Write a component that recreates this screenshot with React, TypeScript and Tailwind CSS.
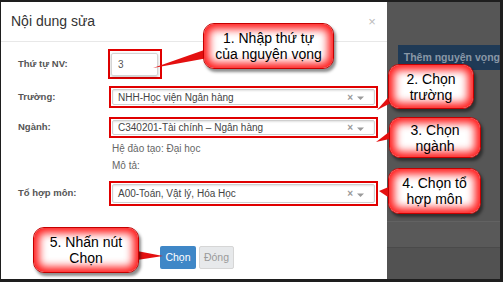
import React from 'react';

const font = { fontFamily: '"Liberation Sans", Arial, sans-serif' };

function Callout({ className, lines }: { className: string; lines: string[] }) {
  return (
    <div
      className={
        'absolute flex flex-col items-center justify-center rounded-[11px] border border-[#c40000] bg-white text-[14px] leading-[16px] text-black shadow-[inset_0_0_9px_5px_#ff1a1a,2px_3px_3px_rgba(0,0,0,0.45)] ' +
        className
      }
    >
      {lines.map((l) => (
        <span key={l}>{l}</span>
      ))}
    </div>
  );
}

function SelectBox({ value, boxClass }: { value: string; boxClass: string }) {
  return (
    <div className={'w-[269px] border-2 border-[#e00000] p-px ' + boxClass}>
      <div className="flex h-full items-center rounded-[2px] border border-[#cfcfcf] bg-white pl-[5px] pr-[9px] text-[10px] text-[#444] shadow-[inset_0_1px_2px_rgba(0,0,0,0.12)]">
        <span className="flex-1">{value}</span>
        <span className="text-[10px] font-bold text-[#999]">×</span>
        <svg width="9" height="6" viewBox="0 0 9 6" className="ml-[3px] mt-[2px]">
          <path d="M1 1.5h7L4.5 5z" fill="#9a9a9a" />
        </svg>
      </div>
    </div>
  );
}

export default function App() {
  return (
    <div
      style={font}
      className="relative flex h-[282px] w-[503px] overflow-hidden border-b-[3px] border-l border-r-[3px] border-t-2 border-[#1e1e1e] bg-[#565656]"
    >
      {/* modal */}
      <div className="flex w-[391px] flex-col bg-white">
        <div className="flex h-[40px] items-center justify-between border-b border-[#e8e8e8] pl-[10px] pr-[11px]">
          <span className="text-[14px] text-[#333]">Nội dung sửa</span>
          <span className="text-[13px] text-[#bbb]">×</span>
        </div>

        <div className="flex flex-col pl-[17px] pt-[7px] text-[10px] text-[#333]">
          <div className="flex items-center">
            <span className="w-[90px] text-[9.5px] font-bold text-[#555]">Thứ tự NV:</span>
            <div className="h-[30px] w-[54px] border-2 border-[#e00000] px-px py-[2px]">
              <div className="flex h-[23px] w-[47px] items-center rounded-[2px] border border-[#d4d4d4] pl-[6px] text-[#555] shadow-[0_1px_3px_rgba(0,0,0,0.25)]">
                3
              </div>
            </div>
          </div>

          <div className="mt-[7px] flex items-center">
            <span className="w-[91px] text-[9.5px] font-bold text-[#555]">Trường:</span>
            <SelectBox value="NHH-Học viện Ngân hàng" boxClass="h-[22px]" />
          </div>

          <div className="mt-[9px] flex items-center">
            <span className="w-[91px] text-[9.5px] font-bold text-[#555]">Ngành:</span>
            <SelectBox value="C340201-Tài chính – Ngân hàng" boxClass="h-[21px]" />
          </div>

          <div className="ml-[94px] mt-[3px] text-[#666]">Hệ đào tạo: Đại học</div>
          <div className="ml-[94px] mt-[2px] text-[#666]">Mô tả:</div>

          <div className="mt-[8px] flex items-center">
            <span className="w-[91px] text-[9.5px] font-bold text-[#555]">Tổ hợp môn:</span>
            <SelectBox value="A00-Toán, Vật lý, Hóa Học" boxClass="h-[25px]" />
          </div>

          <div className="ml-[142px] mt-[40px] flex gap-[3px] text-[10.5px]">
            <button className="h-[23px] w-[36px] rounded-[2px] bg-[#3f87c7] text-white">Chọn</button>
            <button className="h-[23px] w-[35px] rounded-[2px] border border-[#d6d6d6] bg-[#e7e9eb] text-[#9a9a9a]">
              Đóng
            </button>
          </div>
        </div>
      </div>

      {/* dimmed page */}
      <div className="flex flex-1 flex-col">
        <div className="h-[43px]" />
        <div className="ml-[11px] flex h-[25px] items-center bg-[#1f3a56] pl-[6px] text-[10.5px] font-bold whitespace-nowrap text-[#8997a6]">
          Thêm nguyện vọng
        </div>
        <div className="h-[151px]" />
        <div className="h-[26px] border-t border-[#626262] bg-[#595959]" />
        <div className="flex-1 border-t border-[#4a4a4a] bg-[#525252]" />
      </div>

      {/* callouts */}
      <svg className="absolute left-0 top-0" width="503" height="282">
        <polygon points="152,66 206,47 207,56" fill="#e41010" />
        <polygon points="376,108 392,90 394,99" fill="#e41010" />
        <polygon points="375,140 392,127 393,136" fill="#e41010" />
        <polygon points="378,189 390,184 390,197" fill="#e41010" />
        <polygon points="136,249 136,258 162,254" fill="#e41010" />
      </svg>
      <Callout className="left-[202px] top-[21px] h-[46px] w-[131px]" lines={['1. Nhập thứ tự', 'của nguyện vọng']} />
      <Callout className="left-[387px] top-[62px] h-[45px] w-[86px]" lines={['2. Chọn', 'trường']} />
      <Callout className="left-[388px] top-[115px] h-[41px] w-[92px]" lines={['3. Chọn', 'ngành']} />
      <Callout className="left-[387px] top-[166px] h-[46px] w-[93px]" lines={['4. Chọn tổ', 'hợp môn']} />
      <Callout className="left-[32px] top-[225px] h-[46px] w-[106px]" lines={['5. Nhấn nút', 'Chọn']} />
    </div>
  );
}
